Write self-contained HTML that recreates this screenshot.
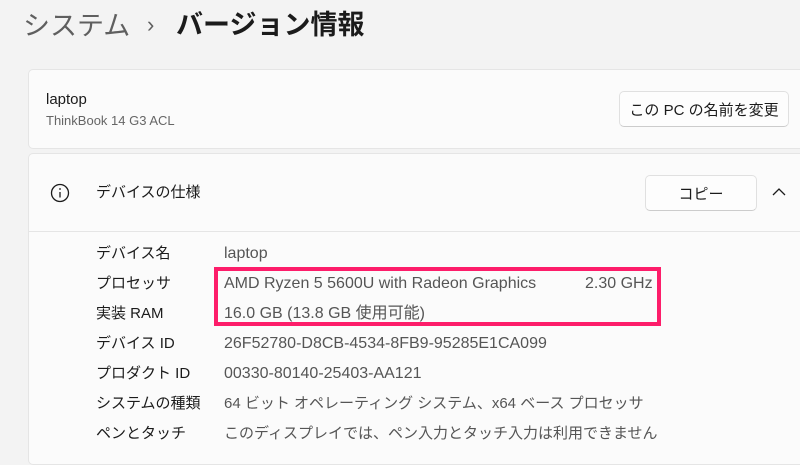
<!DOCTYPE html>
<html><head><meta charset="utf-8"><style>
body{margin:0;width:800px;height:450px;overflow:hidden;background:#f3f3f3;font-family:"Liberation Sans","Noto Sans CJK JP",sans-serif;color:#1b1b1b;position:relative}
.a{position:absolute;white-space:nowrap;line-height:20px}
.card{position:absolute;left:28px;width:790px;background:#fbfbfb;border:1px solid #e5e5e5;border-radius:5px}
.btn{position:absolute;background:#fdfdfd;border:1px solid #e0e0e0;border-bottom-color:#ccc;border-radius:5px;font-size:15px;display:flex;align-items:center;justify-content:center}
.l{left:96px;font-size:15px}
.v{left:224px;font-size:16px;color:#555}
</style></head><body>
<div class="a" style="left:23px;top:10px;font-size:27px;line-height:32px;color:#5f5f5f">システム</div>
<div class="a" style="left:147px;top:12px;font-size:22px;line-height:26px;color:#5f5f5f">›</div>
<div class="a" style="left:176px;top:9px;font-size:27px;line-height:32px;font-weight:bold;color:#1b1b1b">バージョン情報</div>
<div class="card" style="top:69px;height:78px"></div>
<div class="a" style="left:46px;top:90px;font-size:15px">laptop</div>
<div class="a" style="left:46px;top:111px;font-size:13px;color:#666">ThinkBook 14 G3 ACL</div>
<div class="btn" style="left:619px;top:91px;width:168px;height:34px">この PC の名前を変更</div>
<div class="card" style="top:153px;height:310px"></div>
<div class="a" style="left:28px;top:231px;width:790px;height:1px;background:#e5e5e5"></div>
<svg class="a" style="left:50px;top:183px" width="20" height="20"><circle cx="10" cy="10" r="8.5" fill="none" stroke="#1b1b1b" stroke-width="1.3"/><line x1="10" y1="9" x2="10" y2="14.5" stroke="#1b1b1b" stroke-width="1.3"/><circle cx="10" cy="6" r="0.9" fill="#1b1b1b"/></svg>
<div class="a" style="left:96px;top:183px;font-size:15px">デバイスの仕様</div>
<div class="btn" style="left:645px;top:175px;width:110px;height:34px">コピー</div>
<svg class="a" style="left:772px;top:187px" width="14" height="10"><path d="M1 8 L7 2 L13 8" fill="none" stroke="#1b1b1b" stroke-width="1.3"/></svg>
<div class="a l" style="top:244px">デバイス名</div><div class="a v" style="top:244px">laptop</div>
<div class="a l" style="top:274px">プロセッサ</div><div class="a v" style="top:274px">AMD Ryzen 5 5600U with Radeon Graphics</div><div class="a v" style="left:585px;top:274px">2.30 GHz</div>
<div class="a l" style="top:304px">実装 RAM</div><div class="a v" style="top:304px">16.0 GB (13.8 GB 使用可能)</div>
<div class="a l" style="top:334px">デバイス ID</div><div class="a v" style="top:334px">26F52780-D8CB-4534-8FB9-95285E1CA099</div>
<div class="a l" style="top:364px">プロダクト ID</div><div class="a v" style="top:364px">00330-80140-25403-AA121</div>
<div class="a l" style="top:394px">システムの種類</div><div class="a v" style="top:394px;font-size:15px">64 ビット オペレーティング システム、x64 ベース プロセッサ</div>
<div class="a l" style="top:424px">ペンとタッチ</div><div class="a v" style="top:424px;font-size:15px">このディスプレイでは、ペン入力とタッチ入力は利用できません</div>
<div class="a" style="left:214px;top:267px;width:439px;height:51px;border:4px solid #fd1d6a"></div>
</body></html>
